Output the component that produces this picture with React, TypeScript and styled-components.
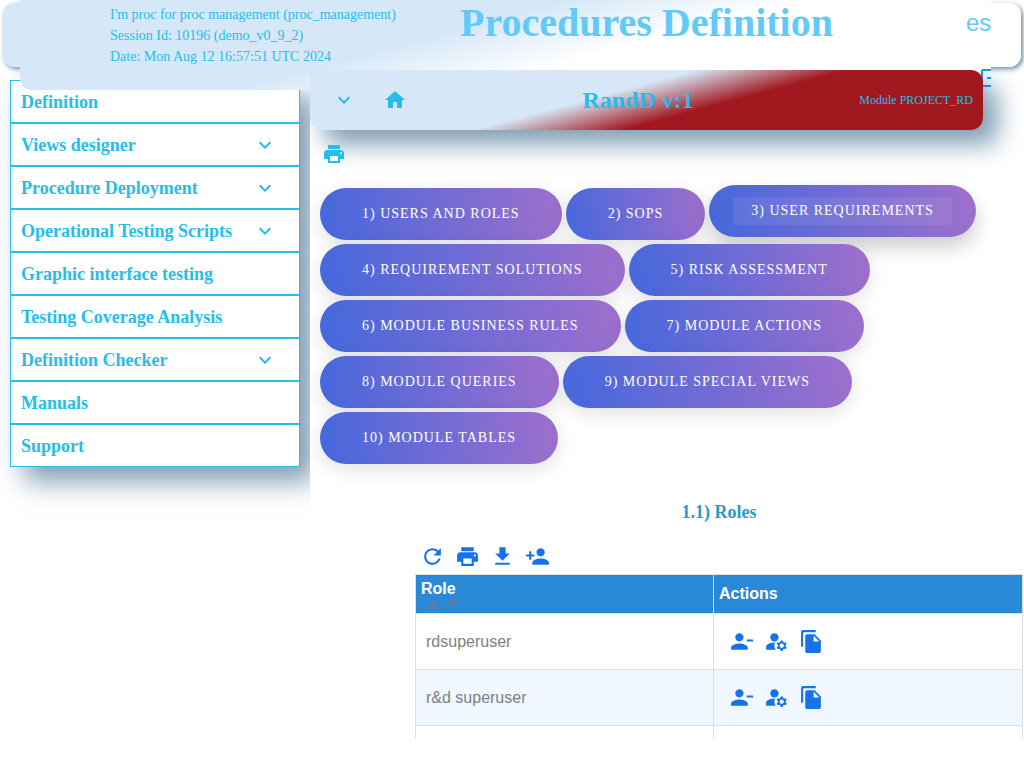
import React from "react";
import styled, { createGlobalStyle } from "styled-components";
import {
  MdExpandMore,
  MdFileCopy,
  MdDownload,
  MdHome,
  MdLogout,
  MdManageAccounts,
  MdPersonAdd,
  MdPersonRemove,
  MdPrint,
  MdRefresh,
} from "react-icons/md";

const serif = '"Liberation Serif", "Times New Roman", serif';
const sans = '"Liberation Sans", Arial, sans-serif';

const colors = {
  cyan: "#26bdea",
  sky: "#61caf9",
  pale: "#d6e8f7",
  red: "#a2181f",
  header: "#2a88d8",
  action: "#1672e8",
  line: "#dddddd",
};

const deepShadow =
  "15px 15px 25px rgba(36, 87, 125, 0.56), 0 0 20px rgba(0, 0, 0, 0.03)";

const GlobalStyle = createGlobalStyle`
  * { box-sizing: border-box; }
  body { margin: 0; background: #fff; font-family: ${serif}; }
  svg { display: block; flex: none; }
`;

const Page = styled.div`
  display: flex;
  flex-direction: column;
  min-height: 100vh;
  overflow: hidden;
`;

const TopBar = styled.header`
  position: relative;
  z-index: 1;
  height: 64px;
  margin: 3px;
  border-radius: 12px;
  background: linear-gradient(165deg, ${colors.pale} 42%, #fff 60%);
  box-shadow: 2px 2px 5px rgba(36, 87, 125, 0.7);
`;

const TitleSheet = styled.div`
  position: absolute;
  top: -3px;
  left: 17px;
  right: 30px;
  height: 90px;
  padding-left: 90px;
  display: flex;
  align-items: flex-start;
  border-radius: 0 0 0 12px;
  overflow: hidden;
  background: linear-gradient(165deg, ${colors.pale} 42%, #fff 60%);
`;

const SessionInfo = styled.div`
  min-width: 300px;
  padding-top: 4px;
  color: ${colors.cyan};
  font-size: 14px;
  line-height: 21px;
  white-space: nowrap;

  p { margin: 0; }
`;

const PageTitle = styled.h1`
  margin: 0 0 0 50px;
  color: ${colors.sky};
  font-size: 40px;
  line-height: 46px;
  white-space: nowrap;
`;

const HeaderTools = styled.div`
  display: flex;
  flex-direction: column;
  width: 25px;
  margin-left: auto;
  padding-top: 8px;
`;

const LanguageButton = styled.button`
  padding: 0;
  border: 0;
  background: none;
  color: ${colors.sky};
  font: 24px/30px ${sans};
  text-align: left;
`;

const LogoutButton = styled.button`
  display: flex;
  width: 24px;
  margin: 28px 0 0 13px;
  padding: 0;
  border: 0;
  background: none;
  color: #0ea5ec;
`;

const Body = styled.div`
  display: flex;
  align-items: flex-start;
`;

const Sidebar = styled.nav`
  flex: none;
  width: 310px;
  padding: 10px 10px 60px;
  overflow: hidden;
`;

const Menu = styled.ul`
  margin: 0;
  padding: 0;
  list-style: none;
  box-shadow: ${deepShadow};
`;

const MenuButton = styled.button`
  display: flex;
  align-items: center;
  justify-content: space-between;
  width: 100%;
  height: 43px;
  padding: 0 22px 0 10px;
  border: 1px solid ${colors.cyan};
  background: #fff;
  color: ${colors.cyan};
  font: bold 18px/20px ${serif};
  text-align: left;
`;

const Main = styled.main`
  position: relative;
  z-index: 2;
  flex: 1;
  min-width: 0;
  height: calc(100vh - 100px);
  overflow: hidden;
`;

const ModuleBar = styled.section`
  display: flex;
  align-items: center;
  height: 60px;
  margin-right: 41px;
  padding: 0 10px 0 22px;
  border-radius: 12px;
  background: linear-gradient(165deg, ${colors.pale} 43%, ${colors.red} 60%);
  box-shadow: ${deepShadow};
  color: ${colors.cyan};
`;

const ModuleNav = styled.div`
  display: flex;
  gap: 27px;
  margin-right: 10px;
`;

const IconButton = styled.button<{ $tone: string }>`
  display: flex;
  padding: 0;
  border: 0;
  background: none;
  color: ${(p) => p.$tone};
`;

const ModuleTitle = styled.h2`
  flex: 1;
  margin: 0;
  font-size: 24px;
  line-height: 28px;
  text-align: center;
`;

const ModuleName = styled.span`
  font-size: 12px;
  line-height: 16px;
`;

const PrintRow = styled.div`
  position: relative;
  display: flex;
  padding: 12px;
`;

const Sections = styled.div`
  display: flex;
  flex-wrap: wrap;
  gap: 4px;
  padding: 10px;
`;

const SectionButton = styled.button<{ $active?: boolean }>`
  position: relative;
  height: 52px;
  padding: 0 42px;
  border: 0;
  border-radius: 26px;
  background: linear-gradient(80deg, #4568dc, #9f6fcc);
  box-shadow: ${(p) =>
    p.$active
      ? "0 10px 20px rgba(0, 0, 0, 0.2)"
      : "0 5px 20px rgba(0, 0, 0, 0.12)"};
  color: #fff;
  font: 14px/20px ${serif};
  letter-spacing: 1px;
  text-transform: uppercase;
  white-space: nowrap;
  transform: ${(p) => (p.$active ? "translateY(-3px)" : "none")};

  &::before {
    content: "";
    display: ${(p) => (p.$active ? "block" : "none")};
    position: absolute;
    inset: 12px 24px;
    border-radius: 4px;
    background: rgba(255, 255, 255, 0.08);
  }
`;

const RolesPanel = styled.section`
  margin: 28px 1px 0 105px;
`;

const RolesTitle = styled.h3`
  margin: 0;
  color: #2a9bc4;
  font-size: 18px;
  line-height: 20px;
  text-align: center;
`;

const Actions = styled.div`
  display: flex;
  gap: 10px;
`;

const Toolbar = styled(Actions)`
  padding: 22px 5px 5px;
`;

const RolesTable = styled.table`
  width: 100%;
  border-collapse: collapse;
  table-layout: fixed;
  font: 16px/20px ${sans};
`;

const HeadCell = styled.th<{ $width?: string }>`
  width: ${(p) => p.$width ?? "auto"};
  height: 39px;
  padding: 0 5px;
  border: 1px solid ${colors.line};
  background: ${colors.header};
  color: #fff;
  text-align: left;
`;

const SortArrows = styled.span`
  display: flex;
  gap: 5px;
  padding-left: 5px;
  color: #5580ad;
`;

const Row = styled.tr<{ $tinted?: boolean }>`
  height: 56px;
  background: ${(p) => (p.$tinted ? "#f0f7fe" : "#fff")};
`;

const Cell = styled.td`
  padding: 0 10px;
  border: 1px solid ${colors.line};
  color: #808080;
`;

const ActionCell = styled(Cell)`
  padding: 0 15px;
`;

const menu = [
  { label: "Definition" },
  { label: "Views designer", open: true },
  { label: "Procedure Deployment", open: true },
  { label: "Operational Testing Scripts", open: true },
  { label: "Graphic interface testing" },
  { label: "Testing Coverage Analysis" },
  { label: "Definition Checker", open: true },
  { label: "Manuals" },
  { label: "Support" },
];

const sections = [
  "1) Users and Roles",
  "2) SOPs",
  "3) User Requirements",
  "4) Requirement Solutions",
  "5) Risk Assessment",
  "6) Module Business Rules",
  "7) Module Actions",
  "8) Module Queries",
  "9) Module Special Views",
  "10) Module Tables",
];

const tools = [
  { label: "Refresh", Icon: MdRefresh },
  { label: "Print", Icon: MdPrint },
  { label: "Download", Icon: MdDownload },
  { label: "Add role", Icon: MdPersonAdd },
];

const rowActions = [
  { label: "Remove role", Icon: MdPersonRemove },
  { label: "Rename role", Icon: MdManageAccounts },
  { label: "Clone role", Icon: MdFileCopy },
];

const roles = ["rdsuperuser", "r&d superuser"];

export default function App() {
  return (
    <Page>
      <GlobalStyle />
      <TopBar>
        <TitleSheet>
          <SessionInfo>
            <p>I'm proc for proc management (proc_management)</p>
            <p>Session Id: 10196 (demo_v0_9_2)</p>
            <p>Date: Mon Aug 12 16:57:51 UTC 2024</p>
          </SessionInfo>
          <PageTitle>Procedures Definition</PageTitle>
          <HeaderTools>
            <LanguageButton>es</LanguageButton>
            <LogoutButton aria-label="Log out">
              <MdLogout size={24} />
            </LogoutButton>
          </HeaderTools>
        </TitleSheet>
      </TopBar>
      <Body>
        <Sidebar>
          <Menu>
            {menu.map((item) => (
              <li key={item.label}>
                <MenuButton>
                  {item.label}
                  {item.open && <MdExpandMore size={24} />}
                </MenuButton>
              </li>
            ))}
          </Menu>
        </Sidebar>
        <Main>
          <ModuleBar>
            <ModuleNav>
              <IconButton $tone={colors.cyan} aria-label="Expand">
                <MdExpandMore size={24} />
              </IconButton>
              <IconButton $tone={colors.cyan} aria-label="Home">
                <MdHome size={24} />
              </IconButton>
            </ModuleNav>
            <ModuleTitle>RandD v:1</ModuleTitle>
            <ModuleName>Module PROJECT_RD</ModuleName>
          </ModuleBar>
          <PrintRow>
            <IconButton $tone={colors.cyan} aria-label="Print">
              <MdPrint size={24} />
            </IconButton>
          </PrintRow>
          <Sections>
            {sections.map((label, i) => (
              <SectionButton key={label} $active={i === 2}>
                {label}
              </SectionButton>
            ))}
          </Sections>
          <RolesPanel>
            <RolesTitle>1.1) Roles</RolesTitle>
            <Toolbar>
              {tools.map(({ label, Icon }) => (
                <IconButton key={label} $tone={colors.action} aria-label={label}>
                  <Icon size={25} />
                </IconButton>
              ))}
            </Toolbar>
            <RolesTable>
              <thead>
                <tr>
                  <HeadCell $width="298px">
                    Role
                    <SortArrows>
                      <svg width="14" height="10" viewBox="0 0 14 10">
                        <path d="M7 0l7 10H0z" fill="currentColor" />
                      </svg>
                      <svg width="14" height="10" viewBox="0 0 14 10">
                        <path d="M0 0h14L7 10z" fill="currentColor" />
                      </svg>
                    </SortArrows>
                  </HeadCell>
                  <HeadCell>Actions</HeadCell>
                </tr>
              </thead>
              <tbody>
                {roles.map((role, i) => (
                  <Row key={role} $tinted={i % 2 === 1}>
                    <Cell>{role}</Cell>
                    <ActionCell>
                      <Actions>
                        {rowActions.map(({ label, Icon }) => (
                          <IconButton
                            key={label}
                            $tone={colors.action}
                            aria-label={label}
                          >
                            <Icon size={25} />
                          </IconButton>
                        ))}
                      </Actions>
                    </ActionCell>
                  </Row>
                ))}
                <Row>
                  <Cell />
                  <ActionCell />
                </Row>
              </tbody>
            </RolesTable>
          </RolesPanel>
        </Main>
      </Body>
    </Page>
  );
}
